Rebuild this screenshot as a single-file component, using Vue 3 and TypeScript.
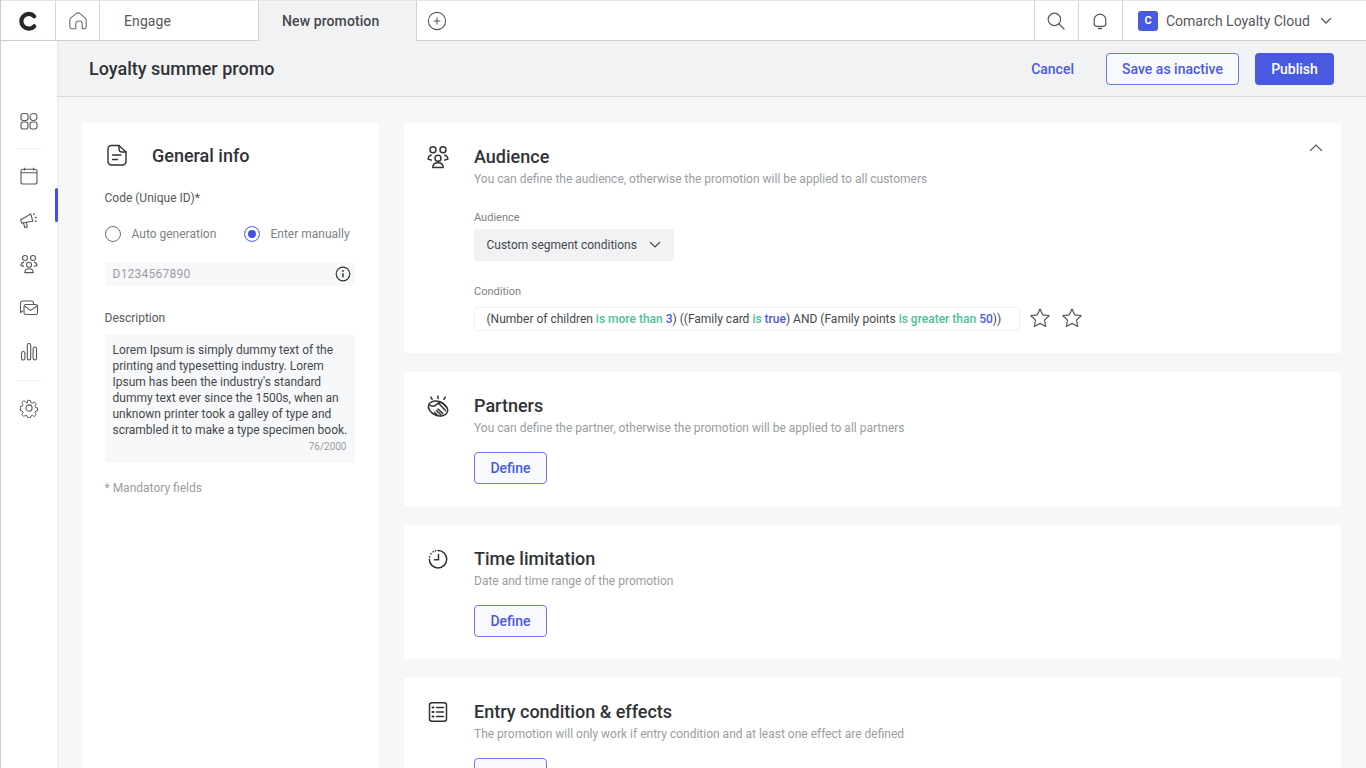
<script setup lang="ts">
const conditionParts: { text: string; kind?: 'g' | 'b' }[] = [
  { text: '(Number of children ' },
  { text: 'is more than ', kind: 'g' },
  { text: '3', kind: 'b' },
  { text: ') ((Family card ' },
  { text: 'is ', kind: 'g' },
  { text: 'true', kind: 'b' },
  { text: ') AND (Family points ' },
  { text: 'is greater than ', kind: 'g' },
  { text: '50', kind: 'b' },
  { text: '))' },
]
</script>

<template>
  <div class="app">
    <header class="topbar">
      <div class="logo">
        <svg width="24" height="24" viewBox="0 0 24 24"><path d="M18.200 7.300A7.400 7.400 0 1 0 18.200 17.300" fill="none" stroke="#26282b" stroke-width="4.200" stroke-linecap="round"/></svg>
      </div>
      <div class="home">
        <svg width="20" height="20" viewBox="0 0 20 20" fill="none" stroke="#6b6e72" stroke-width="1.100" stroke-linejoin="round"><path d="M1.800 15.200V9.400c0-1 .4-1.800 1.200-2.500l5-4.200a3 3 0 0 1 4 0l5 4.200c.8.700 1.200 1.500 1.200 2.500v5.800a2.600 2.600 0 0 1-2.600 2.600h-1.400v-4.600a3.200 3.200 0 0 0-6.400 0v4.600H4.400a2.600 2.600 0 0 1-2.600-2.600z"/></svg>
      </div>
      <div class="tab tab-plain">Engage</div>
      <div class="tab tab-active">New promotion</div>
      <div class="add">
        <svg width="20" height="20" viewBox="0 0 20 20" fill="none" stroke="#55585c" stroke-width="1.100"><circle cx="10" cy="10" r="8.600"/><path d="M10 6.600v6.800M6.600 10h6.800"/></svg>
      </div>
      <div class="spacer"></div>
      <div class="tool">
        <svg width="18" height="18" viewBox="0 0 18 18" fill="none" stroke="#55585c" stroke-width="1.200"><circle cx="7.400" cy="7.400" r="6.200"/><path d="M12 12l5 5" stroke-linecap="round"/></svg>
      </div>
      <div class="tool">
        <svg width="18" height="18" viewBox="0 0 18 18" fill="none" stroke="#55585c" stroke-width="1.200"><path d="M3.200 8a5.800 5.800 0 0 1 11.600 0v3.600c0 1.700-1.100 2.800-2.800 2.800H6c-1.700 0-2.800-1.100-2.800-2.800z"/><path d="M7.400 16.600h3.200" stroke-linecap="round" stroke-width="1.500"/></svg>
      </div>
      <div class="account">
        <span class="badge">C</span>
        <span class="account-name">Comarch Loyalty Cloud</span>
        <svg class="chev" width="12" height="8" viewBox="0 0 12 8" fill="none" stroke="#55585c" stroke-width="1.300"><path d="M1.500 1.500 6 6l4.500-4.500" stroke-linecap="round"/></svg>
      </div>
    </header>

    <div class="body">
      <nav class="sidebar">
        <span class="active-bar"></span>
        <div class="nav-group first">
          <svg width="20" height="20" viewBox="0 0 20 20" fill="none" stroke="#55585c" stroke-width="1.100"><rect x="2" y="2.500" width="7" height="7" rx="2.200"/><rect x="11" y="2.500" width="7" height="7" rx="3.500"/><rect x="2" y="11" width="7" height="7" rx="2.200"/><rect x="11" y="11" width="7" height="7" rx="2.200"/></svg>
        </div>
        <div class="nav-group mid">
          <svg width="20" height="20" viewBox="0 0 20 20" fill="none" stroke="#55585c" stroke-width="1.100"><rect x="2" y="3.200" width="16" height="14.800" rx="2"/><path d="M2 6.800h16M5.500 1.800v2.600M14.500 1.800v2.600"/></svg>
          <svg width="20" height="20" viewBox="0 0 20 20" fill="none" stroke="#55585c" stroke-width="1.100" stroke-linejoin="round"><path d="M1.800 9.800l.8 3.400 2.200-.4 9-1.500L11.800 4z"/><path d="M4.500 13l1.300 4.600 2.600-.7-1.100-4.500M14.600 4.800l.8-1.200M15.800 7.800l1.600-.4M16 10.800l1.400.6" stroke-linecap="round"/></svg>
          <svg width="20" height="20" viewBox="0 0 20 20" fill="none" stroke="#55585c" stroke-width="1.100" stroke-linejoin="round"><circle cx="6" cy="4" r="2.500"/><circle cx="14" cy="4" r="2.500"/><circle cx="10" cy="10.800" r="2.500"/><path d="M5 8.100c-1.800.3-2.900 1.500-3.100 3.400l3.100.9M15 8.100c1.800.3 2.900 1.500 3.100 3.400l-3.100.9M5.800 18.600c.1-2.700 1.900-3.900 4.200-3.900s4.100 1.200 4.200 3.900z"/></svg>
          <svg width="20" height="20" viewBox="0 0 20 20" fill="none" stroke="#55585c" stroke-width="1.100" stroke-linejoin="round"><path d="M3.800 12.800 1.500 14.500V5a2 2 0 0 1 2-2h9a2 2 0 0 1 2 2v1.500"/><rect x="5" y="6.500" width="13.500" height="10" rx="1.800"/><path d="M5.500 8l6.200 4.400L18 8"/></svg>
          <svg width="20" height="20" viewBox="0 0 20 20" fill="none" stroke="#55585c" stroke-width="1.100"><rect x="2.500" y="9.500" width="3.400" height="8.500" rx="1.700"/><rect x="8.300" y="1.500" width="3.400" height="16.500" rx="1.700"/><rect x="14.100" y="5" width="3.400" height="13" rx="1.700"/></svg>
        </div>
        <div class="nav-group last">
          <svg width="20" height="20" viewBox="0 0 20 20" fill="none" stroke="#55585c" stroke-width="1.100" stroke-linejoin="round"><circle cx="10" cy="10" r="3.100"/><path d="M8.400 1.500h3.200l.5 2.500 1.700.7 2.100-1.400 2.200 2.300-1.400 2.100.7 1.700 2.100.4v3.200l-2.100.5-.7 1.700 1.400 2.100-2.300 2.200-2-1.400-1.700.7-.5 2.100H8.400l-.5-2.200-1.700-.7-2.100 1.400-2.200-2.200 1.400-2.100-.7-1.700-2.100-.5V8.400l2.100-.4.7-1.700L2 4.200l2.200-2.300 2.100 1.400L8 4.600z" transform="translate(1 1) scale(.9)"/></svg>
        </div>
      </nav>

      <div class="workspace">
        <div class="pagehead">
          <h1>Loyalty summer promo</h1>
          <div class="actions">
            <span class="cancel">Cancel</span>
            <span class="btn outline save">Save as inactive</span>
            <span class="btn solid">Publish</span>
          </div>
        </div>

        <main class="content">
          <aside class="card info">
            <div class="info-head">
              <svg width="24" height="24" viewBox="0 0 24 24" fill="none" stroke="#303336" stroke-width="1.400" stroke-linejoin="round"><path d="M6.500 2.500H14l7 6.500v9.500a3.500 3.500 0 0 1-3.500 3.500h-11A3.500 3.500 0 0 1 3 18.500V6a3.500 3.500 0 0 1 3.500-3.500z"/><path d="M14 2.500V6a3 3 0 0 0 3 3h4M7.500 12h8.500M7.500 16.500h5" stroke-linecap="round"/></svg>
              <h2>General info</h2>
            </div>
            <label class="field-label code">Code (Unique ID)*</label>
            <div class="radios">
              <span class="radio"><i class="dot"></i>Auto generation</span>
              <span class="radio on"><i class="dot"></i>Enter manually</span>
            </div>
            <div class="input">
              <span>D1234567890</span>
              <svg width="16" height="16" viewBox="0 0 16 16" fill="none" stroke="#303336" stroke-width="1.200"><circle cx="8" cy="8" r="6.800"/><path d="M8 7.200v4" stroke-width="1.500"/><circle cx="8" cy="4.900" r=".9" fill="#303336" stroke="none"/></svg>
            </div>
            <label class="field-label desc">Description</label>
            <div class="textarea">
              <p>Lorem Ipsum is simply dummy text of the printing and typesetting industry. Lorem Ipsum has been the industry's standard dummy text ever since the 1500s, when an unknown printer took a galley of type and scrambled it to make a type specimen book.</p>
              <div class="count">76/2000</div>
            </div>
            <div class="mandatory">* Mandatory fields</div>
          </aside>

          <section class="sections">
            <article class="card sec">
              <div class="sec-icon">
                <svg width="24" height="24" viewBox="0 0 24 24" fill="none" stroke="#303336" stroke-width="1.500" stroke-linejoin="round"><circle cx="7" cy="4.800" r="3"/><circle cx="17" cy="4.800" r="3"/><circle cx="12" cy="13.200" r="3"/><path d="M5.800 10c-2.300.4-3.500 1.800-3.700 4.100l3.800 1.200M18.200 10c2.300.4 3.500 1.800 3.700 4.100l-3.800 1.200M6.800 22.400c.1-3.100 2.300-4.600 5.200-4.600s5.100 1.500 5.200 4.600z"/></svg>
              </div>
              <div class="sec-body">
                <h3>Audience</h3>
                <p class="sub">You can define the audience, otherwise the promotion will be applied to all customers</p>
                <div class="small-label aud-label">Audience</div>
                <div class="select">Custom segment conditions
                  <svg width="12" height="8" viewBox="0 0 12 8" fill="none" stroke="#45484c" stroke-width="1.200"><path d="M1.500 1.500 6 6l4.500-4.500" stroke-linecap="round"/></svg>
                </div>
                <div class="small-label cond-label">Condition</div>
                <div class="cond-row">
                  <div class="cond"><span><span v-for="(part, i) in conditionParts" :key="i" :class="part.kind">{{ part.text }}</span></span></div>
                  <svg class="star" width="22" height="22" viewBox="0 0 22 22" fill="none" stroke="#55585c" stroke-width="1.200" stroke-linejoin="round"><path d="M11 2l2.800 5.900 6.400.8-4.700 4.400 1.200 6.400L11 16.400l-5.700 3.100 1.200-6.400L1.800 8.700l6.400-.8z"/></svg>
                  <svg class="star" width="22" height="22" viewBox="0 0 22 22" fill="none" stroke="#55585c" stroke-width="1.200" stroke-linejoin="round"><path d="M11 2l2.800 5.900 6.400.8-4.700 4.400 1.200 6.400L11 16.400l-5.700 3.100 1.200-6.400L1.800 8.700l6.400-.8z"/></svg>
                </div>
              </div>
              <svg class="collapse" width="14" height="9" viewBox="0 0 14 9" fill="none" stroke="#55585c" stroke-width="1.200"><path d="M1.500 7.500 7 2l5.500 5.500" stroke-linecap="round"/></svg>
            </article>

            <article class="card sec">
              <div class="sec-icon">
                <svg width="24" height="24" viewBox="0 0 24 24" fill="none" stroke="#303336" stroke-width="1.500" stroke-linejoin="round" stroke-linecap="round"><ellipse cx="12" cy="14.500" rx="10" ry="7" transform="rotate(22 12 14.500)"/><path d="M3 10.500c2.400 2.200 4.800 2.200 6.800.6l2.600-2c1.800-1 3.200-.6 4.400.4l4 4M12.400 9.100l7 7.500M15 21l-4.500-4.500M12 21.800l-3.500-3.500M16.800 19.600 12 15M12 2v2.400M4.800 3.200l1.400 2M19.200 3.200l-1.400 2"/></svg>
              </div>
              <div class="sec-body">
                <h3>Partners</h3>
                <p class="sub">You can define the partner, otherwise the promotion will be applied to all partners</p>
                <span class="btn outline define">Define</span>
              </div>
            </article>

            <article class="card sec">
              <div class="sec-icon">
                <svg width="24" height="24" viewBox="0 0 24 24" fill="none" stroke="#303336" stroke-width="1.500"><path d="M12 3.500a8.700 8.700 0 1 1-8.700 8.700" stroke-linecap="round"/><path d="M3.600 9.800l.1-.1M5 6.800l.1-.1M7.200 4.800l.1-.1M9.500 3.800l.1-.1" stroke-width="1.600" stroke-linecap="round"/><path d="M12.500 7.500v5.200H8.500" stroke-linecap="round" stroke-linejoin="round"/></svg>
              </div>
              <div class="sec-body">
                <h3>Time limitation</h3>
                <p class="sub">Date and time range of the promotion</p>
                <span class="btn outline define">Define</span>
              </div>
            </article>

            <article class="card sec">
              <div class="sec-icon">
                <svg width="24" height="24" viewBox="0 0 24 24" fill="none" stroke="#303336" stroke-width="1.500"><rect x="3.500" y="2.700" width="17" height="18.600" rx="2.500"/><path d="M10.500 7.500h7M10.500 12h7M10.500 16.500h7" stroke-linecap="round"/><path d="M6.500 7.500h1M6.500 12h1M6.500 16.500h1" stroke-width="2" stroke-linecap="round"/></svg>
              </div>
              <div class="sec-body">
                <h3>Entry condition &amp; effects</h3>
                <p class="sub">The promotion will only work if entry condition and at least one effect are defined</p>
                <span class="btn outline define">Define</span>
              </div>
            </article>
          </section>
        </main>
      </div>
    </div>
  </div>
</template>

<style>
html, body { margin: 0; overflow: hidden; }
</style>

<style scoped>
* { box-sizing: border-box; }
.app {
  width: 1366px;
  height: 768px;
  overflow: hidden;
  background: #fff;
  font-family: Roboto, "Liberation Sans", sans-serif;
  color: #45484c;
  display: flex;
  flex-direction: column;
  border-left: 1px solid #c9cbce;
}
.topbar {
  height: 41px;
  flex: none;
  display: flex;
  align-items: stretch;
  background: #fff;
  border-top: 1px solid #e4e5e7;
  border-bottom: 1px solid #cfd1d3;
}
.logo { width: 55px; display: flex; align-items: center; justify-content: center; padding-right: 1px; border-right: 1px solid #d4d6d8; }
.home { width: 44px; display: flex; align-items: center; justify-content: center; padding-left: 1px; border-right: 1px solid #d4d6d8; }
.tab { display: flex; align-items: center; font-size: 14px; letter-spacing: .1px; }
.tab-plain { width: 158px; padding-left: 24px; color: #55585c; }
.tab-active {
  width: 159px;
  padding-left: 23px;
  background: #f1f2f4;
  font-weight: 500;
  color: #45484c;
  margin-bottom: -1px;
  border-left: 1px solid #cfd1d3;
  border-right: 1px solid #cfd1d3;
}
.add { width: 40px; display: flex; align-items: center; justify-content: center; }
.spacer { flex: 1; }
.tool { width: 44px; display: flex; align-items: center; justify-content: center; padding-right: 2px; border-left: 1px solid #d4d6d8; }
.account {
  width: 244px;
  display: flex;
  align-items: center;
  padding-left: 15px;
  border-left: 1px solid #d4d6d8;
  font-size: 14px;
  color: #55585c;
}
.badge {
  width: 20px;
  height: 20px;
  border-radius: 3px;
  background: #4a5ae0;
  color: #fff;
  font-size: 11px;
  font-weight: 700;
  display: flex;
  align-items: center;
  justify-content: center;
  margin-right: 8px;
}
.chev { margin-left: 10px; }
.body { flex: 1; display: flex; min-height: 0; }
.sidebar {
  width: 56px;
  flex: none;
  background: #fff;
  display: flex;
  flex-direction: column;
  align-items: center;
  padding-top: 70px;
  padding-right: 1px;
  box-shadow: 1px 0 3px rgba(0, 0, 0, .06);
  position: relative;
  z-index: 1;
}
.nav-group { display: flex; flex-direction: column; align-items: center; }
.nav-group.first { padding-bottom: 17px; }
.nav-group.mid { padding: 17px 0 18px; gap: 24px; border-top: 1px solid #f0f1f2; border-bottom: 1px solid #f0f1f2; width: 24px; }
.nav-group.last { padding-top: 17px; }
.active-bar {
  position: absolute;
  left: 54px;
  top: 147px;
  width: 3px;
  height: 34px;
  background: #3f50e6;
  border-radius: 2px;
}
.workspace { flex: 1; min-width: 0; display: flex; flex-direction: column; background: #f6f7f8; }
.pagehead {
  height: 56px;
  flex: none;
  display: flex;
  align-items: center;
  justify-content: space-between;
  padding: 0 32px;
  background: #f1f2f4;
  border-bottom: 1px solid #d8dadc;
}
h1 { margin: 0; font-size: 18px; font-weight: 500; color: #303336; }
.actions { display: flex; align-items: center; }
.cancel { font-size: 14px; font-weight: 500; color: #4a5ae0; margin-right: 32px; }
.btn {
  display: inline-flex;
  align-items: center;
  justify-content: center;
  height: 32px;
  border-radius: 4px;
  font-size: 14px;
  font-weight: 500;
}
.outline { background: #f8f9fc; border: 1px solid #6b79e8; color: #4a5ae0; }
.solid { width: 79px; background: #4a5ae0; color: #fff; margin-left: 16px; }
.save { width: 133px; }
.content {
  flex: 1;
  min-height: 0;
  display: flex;
  align-items: stretch;
  gap: 26px;
  padding: 26px 25px 0;
}
.card { background: #fff; }
.info { width: 296px; flex: none; padding: 19px 23px 19px 22.5px; margin-bottom: -20px; }
.info-head { display: flex; align-items: center; height: 26px; }
.info-head svg { margin-right: 23.5px; }
h2 { margin: 0; font-size: 18px; font-weight: 500; color: #303336; }
.field-label { display: block; font-size: 12px; color: #55585c; }
.code { margin-top: 22px; line-height: 16px; }
.radios { display: flex; align-items: center; margin-top: 19px; height: 18px; }
.radio { flex: none; display: flex; align-items: center; font-size: 12px; color: #7e8185; width: 139px; }
.dot { width: 16px; height: 16px; border: 1px solid #6b6e72; border-radius: 50%; margin-right: 11px; background: #fff; }
.radio.on { width: 110px; }
.radio.on .dot {
  border-color: #6b79e8;
  background: #3f50e6;
  box-shadow: inset 0 0 0 3px #fff;
}
.input {
  margin-top: 19px;
  height: 24px;
  border-radius: 3px;
  background: #f7f8f9;
  display: flex;
  align-items: center;
  justify-content: space-between;
  padding: 0 4px 0 8px;
  font-size: 12px;
  letter-spacing: .25px;
  color: #9a9da1;
}
.desc { margin-top: 24px; line-height: 16px; }
.textarea {
  margin-top: 8px;
  width: 250px;
  border-radius: 4px;
  background: #f7f8f9;
  padding: 8px 4px 10px 8px;
}
.textarea p { margin: 0; font-size: 12px; line-height: 16px; color: #45484c; }
.count { text-align: right; font-size: 10px; line-height: 12px; color: #9a9da1; margin-top: 3px; padding-right: 4px; }
.mandatory { margin-top: 17px; font-size: 12px; line-height: 16px; color: #9a9da1; }
.sections { flex: 1; min-width: 0; display: flex; flex-direction: column; gap: 19px; }
.sec { display: flex; position: relative; padding: 23px 0 22px 22px; flex: none; }
.sec-icon { width: 48px; flex: none; line-height: 0; margin-top: -1px; }
.sec-body { flex: 1; min-width: 0; }
h3 { margin: 0 0 3px; font-size: 18px; line-height: 22px; font-weight: 500; color: #303336; }
.sub { margin: 0; font-size: 12px; line-height: 16px; color: #9a9da1; }
.define { width: 73px; margin-top: 16px; display: flex; }
.small-label { font-size: 11px; line-height: 14px; color: #7e8185; }
.aud-label { margin-top: 24px; }
.select {
  margin-top: 4px;
  width: 200px;
  height: 32px;
  border-radius: 3px;
  background: #f1f2f4;
  display: flex;
  align-items: center;
  padding-left: 12.5px;
  gap: 12px;
  font-size: 12px;
  color: #45484c;
}
.cond-label { margin-top: 24px; }
.cond-row { display: flex; align-items: center; margin-top: 8px; height: 24px; }
.cond {
  width: 546px;
  height: 24px;
  margin-right: -1px;
  border: 1px solid #eeeff1;
  border-radius: 3px;
  display: flex;
  align-items: center;
  padding-left: 11.5px;
  font-size: 12px;
  white-space: pre;
  color: #45484c;
}
.g { color: #4fbf98; font-weight: 500; }
.b { color: #4a5ae0; font-weight: 500; }
.star { margin-left: 10px; margin-top: -2px; }
.collapse { position: absolute; top: 20px; right: 18px; }
</style>
